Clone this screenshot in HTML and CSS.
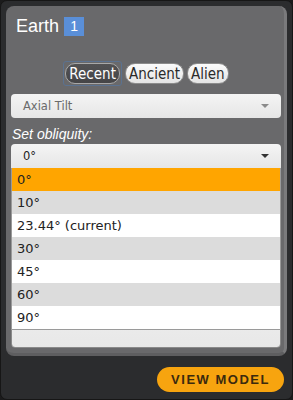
FILE: index.html
```html
<!DOCTYPE html>
<html lang="en">
<head>
  <meta charset="UTF-8" />
  <title>Earth</title>
  <link rel="stylesheet" href="styles.css">
</head>
<body>
  <div class="frame">
    <div class="panel">
      <div class="title">
        <span class="name">Earth</span>
        <span class="badge">1</span>
      </div>

      <div class="tabs">
        <span class="focus"><button class="tab selected">Recent</button></span>
        <button class="tab">Ancient</button>
        <button class="tab">Alien</button>
      </div>

      <div class="select muted">
        <span>Axial Tilt</span>
        <span class="arrow"></span>
      </div>

      <div class="label">Set obliquity:</div>

      <div class="dropdown">
        <div class="select">
          <span>0°</span>
          <span class="arrow dark"></span>
        </div>
        <ul class="options">
          <li class="active">0°</li>
          <li class="alt">10°</li>
          <li>23.44° (current)</li>
          <li class="alt">30°</li>
          <li>45°</li>
          <li class="alt">60°</li>
          <li>90°</li>
        </ul>
        <div class="info"></div>
      </div>
    </div>

    <div class="footer">
      <button class="view">VIEW MODEL</button>
    </div>
  </div>
</body>
</html>
```

FILE: styles.css
```css
html, body {
  margin: 0;
  padding: 0;
  background: #1b1b1c;
}
.frame {
  box-sizing: border-box;
  width: 293px;
  height: 400px;
  border: 1px solid #161616;
  border-radius: 7px;
  background: #2b2c2e;
  padding: 5px 5px 0 5px;
  font-family: 'Liberation Sans', Arial, sans-serif;
}
.panel {
  box-sizing: border-box;
  height: 350px;
  background: #69696b;
  border-radius: 8px;
  border-right: 3px solid #7a7a7c;
  border-bottom: 3px solid #5e5e60;
  padding: 11px 3px 0 5px;
}
.title {
  display: flex;
  align-items: center;
  margin-left: 5px;
  height: 19px;
}
.name {
  color: #fff;
  font-size: 18px;
}
.badge {
  margin-left: 5px;
  width: 20px;
  height: 19px;
  line-height: 19px;
  text-align: center;
  background: #5a8fd8;
  color: #fff;
  font-size: 14px;
}
.tabs {
  display: flex;
  justify-content: center;
  align-items: center;
  gap: 3px;
  margin-top: 25px;
  height: 25px;
}
.focus {
  display: inline-flex;
  padding: 1px;
  border: 1px solid #5b7290;
  border-radius: 3px;
}
.tab {
  font-family: 'Liberation Sans Narrow', 'DejaVu Sans Condensed', sans-serif;
  font-size: 15px;
  height: 21px;
  padding: 0 3px;
  border: 1px solid #8c8c8c;
  border-radius: 10px;
  background: linear-gradient(#fbfbfb, #e4e4e4);
  color: #2a2a2a;
  line-height: 18px;
}
.tab.selected {
  background: linear-gradient(#525254, #454547);
  border-color: #a8a8a8;
  color: #fff;
}
.select {
  position: relative;
  box-sizing: border-box;
  height: 24px;
  margin-top: 8px;
  padding-left: 12px;
  border-radius: 4px;
  background: linear-gradient(#f4f4f4, #e6e6e6);
  font-family: 'DejaVu Sans', Verdana, sans-serif;
  font-size: 11.5px;
  line-height: 24px;
  color: #222;
}
.select.muted {
  color: #6a6a6a;
}
.arrow {
  position: absolute;
  right: 12px;
  top: 10px;
  border-left: 4px solid transparent;
  border-right: 4px solid transparent;
  border-top: 4px solid #8a8a8a;
}
.arrow.dark {
  border-top-color: #333;
}
.label {
  color: #fff;
  font-style: italic;
  font-size: 14px;
  margin-top: 8px;
  padding-left: 1px;
  height: 18px;
}
.dropdown {
  position: relative;
}
.dropdown .select {
  margin-top: 0;
  border-radius: 4px 4px 0 0;
}
.options {
  position: absolute;
  top: 24px;
  left: 0;
  right: 0;
  margin: 0;
  padding: 0;
  list-style: none;
  border: 1px solid #9a9a9a;
  border-top: none;
  background: #fff;
  font-family: 'DejaVu Sans', Verdana, sans-serif;
  font-size: 13px;
  color: #222;
  z-index: 2;
}
.options li {
  height: 23px;
  line-height: 23px;
  padding-left: 5px;
}
.options li.alt {
  background: #dcdcdc;
}
.options li.active {
  background: #ffa500;
}
.info {
  box-sizing: border-box;
  height: 176px;
  margin-top: 4px;
  border: 1px solid #8a8a8a;
  border-radius: 4px;
  background: linear-gradient(#ffffff, #e8e8e8);
}
.footer {
  display: flex;
  justify-content: flex-end;
  padding: 11px 3px 0 0;
}
.view {
  height: 25px;
  width: 127px;
  border: none;
  border-radius: 13px;
  background: #f7a40f;
  color: #3b2a0e;
  font-family: 'Liberation Sans', Arial, sans-serif;
  font-weight: bold;
  font-size: 13px;
  letter-spacing: 1.5px;
  padding: 0;
}
```
